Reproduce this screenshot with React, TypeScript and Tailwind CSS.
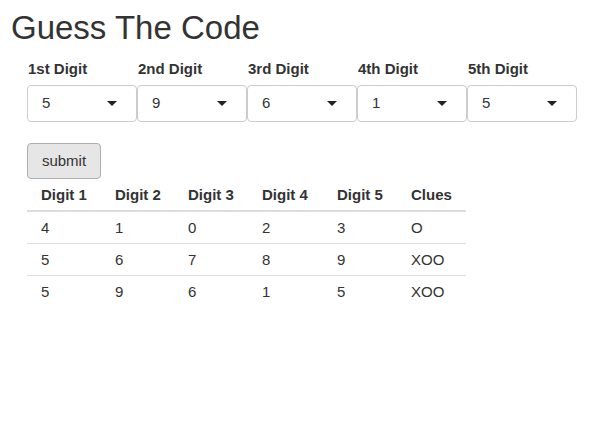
import React from "react";

const digits = ["5", "9", "6", "1", "5"];
const labels = ["1st Digit", "2nd Digit", "3rd Digit", "4th Digit", "5th Digit"];
const headers = ["Digit 1", "Digit 2", "Digit 3", "Digit 4", "Digit 5", "Clues"];
const colW = ["w-[74px]", "w-[73px]", "w-[74px]", "w-[75px]", "w-[74px]", "w-[69px]"];
const rows = [
  ["4", "1", "0", "2", "3", "O"],
  ["5", "6", "7", "8", "9", "XOO"],
  ["5", "9", "6", "1", "5", "XOO"],
];

function Caret() {
  return (
    <svg width="10" height="5" viewBox="0 0 10 5" className="block">
      <path d="M0 0 H10 L5 5 Z" fill="#222" />
    </svg>
  );
}

export default function App() {
  return (
    <div
      className="w-[592px] h-[436px] bg-white text-[#333]"
      style={{ fontFamily: '"Liberation Sans", Arial, Helvetica, sans-serif' }}
    >
      <h1 className="pl-[11px] pt-[10px] text-[33px] leading-[36px] font-normal">Guess The Code</h1>
      <div className="pl-[27px]">
        <div className="flex mt-[13px]">
          {labels.map((l) => (
            <div key={l} className="w-[110px] pl-[1px] text-[15px] leading-[20px] font-bold">
              {l}
            </div>
          ))}
        </div>
        <div className="flex mt-[6px]">
          {digits.map((d, i) => (
            <div
              key={i}
              className="w-[110px] h-[37px] border border-[#ccc] rounded-[4px] flex items-center justify-between pl-[14px] pr-[19px] text-[15px]"
            >
              <span>{d}</span>
              <Caret />
            </div>
          ))}
        </div>
        <button className="mt-[21px] w-[74px] h-[36px] bg-[#e6e6e6] border border-[#adadad] rounded-[4px] text-[15px] text-[#333] flex items-center justify-center">
          submit
        </button>
        <div className="w-[439px] text-[15px] leading-[21px]">
          <div className="flex border-b-2 border-[#ddd] font-bold">
            {headers.map((h, j) => (
              <div key={h} className={`${colW[j]} py-[5px] pl-[14px]`}>
                {h}
              </div>
            ))}
          </div>
          {rows.map((r, i) => (
            <div key={i} className={i > 0 ? "flex border-t border-[#ddd]" : "flex"}>
              {r.map((c, j) => (
                <div key={j} className={`${colW[j]} py-[5px] pl-[14px]`}>
                  {c}
                </div>
              ))}
            </div>
          ))}
        </div>
      </div>
    </div>
  );
}
